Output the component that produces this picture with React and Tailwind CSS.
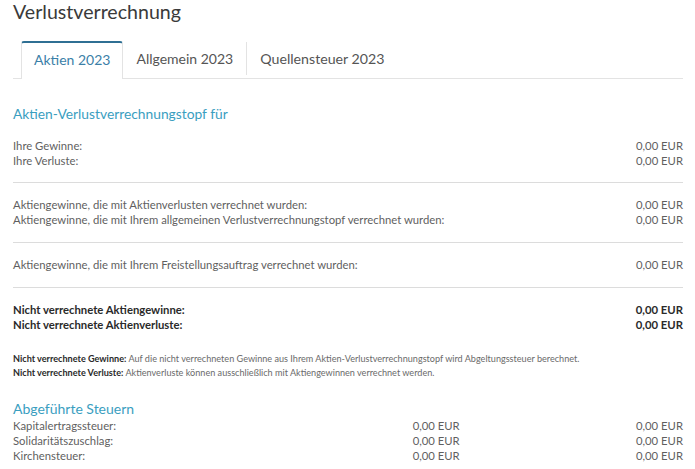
import React from "react";

const tabs = ["Aktien 2023", "Allgemein 2023", "Quellensteuer 2023"];

const Row = ({ label, value, bold }) => (
  <div className={`flex justify-between leading-[15px] ${bold ? "font-bold text-[#2a2a2a]" : "text-[#5f5f5f]"}`}>
    <span>{label}</span>
    <span>{value}</span>
  </div>
);

const taxes = ["Kapitalertragssteuer:", "Solidaritätszuschlag:", "Kirchensteuer:"];

export default function App() {
  return (
    <div className="w-[695px] h-[469px] overflow-hidden bg-white pl-[13px] pr-[12px] font-['Lato',sans-serif] text-[11.3px]">
      <h1 className="text-[19.6px] leading-[24px] text-[#3a3a3a]">Verlustverrechnung</h1>

      <div className="mt-[17px] flex border-b border-[#e3e3e3] pl-[8px]">
        <div className="-mb-px h-[38px] rounded-t-[3px] border-x border-t-2 border-x-[#e3e3e3] border-t-[#2f6f93] bg-white px-[12px] text-[14px] leading-[34px] text-[#3b7fa8]">
          {tabs[0]}
        </div>
        <div className="h-[37px] px-[13px] text-[14px] leading-[36px] text-[#555]">{tabs[1]}</div>
        <div className="mt-[1px] h-[33px] w-px bg-[#e3e3e3]" />
        <div className="h-[37px] px-[13px] text-[14.2px] leading-[36px] text-[#555]">{tabs[2]}</div>
      </div>

      <h2 className="mt-[25px] text-[13.8px] leading-[20px] text-[#3a9ebf]">Aktien-Verlustverrechnungstopf für</h2>

      <div className="border-b border-[#dcdcdc] pt-[14px] pb-[14px]">
        <Row label="Ihre Gewinne:" value="0,00 EUR" />
        <Row label="Ihre Verluste:" value="0,00 EUR" />
      </div>
      <div className="border-b border-[#dcdcdc] pt-[14px] pb-[15px]">
        <Row label="Aktiengewinne, die mit Aktienverlusten verrechnet wurden:" value="0,00 EUR" />
        <Row label="Aktiengewinne, die mit Ihrem allgemeinen Verlustverrechnungstopf verrechnet wurden:" value="0,00 EUR" />
      </div>
      <div className="border-b border-[#dcdcdc] pt-[14px] pb-[15px]">
        <Row label="Aktiengewinne, die mit Ihrem Freistellungsauftrag verrechnet wurden:" value="0,00 EUR" />
      </div>
      <div className="pt-[14px]">
        <Row bold label="Nicht verrechnete Aktiengewinne:" value="0,00 EUR" />
        <Row bold label="Nicht verrechnete Aktienverluste:" value="0,00 EUR" />
      </div>

      <div className="mt-[20px] text-[9.1px] leading-[14px] text-[#6a6a6a]">
        <p>
          <span className="font-bold text-[#2a2a2a]">Nicht verrechnete Gewinne:</span> Auf die nicht verrechneten Gewinne aus Ihrem Aktien-Verlustverrechnungstopf wird Abgeltungssteuer berechnet.
        </p>
        <p>
          <span className="font-bold text-[#2a2a2a]">Nicht verrechnete Verluste:</span> Aktienverluste können ausschließlich mit Aktiengewinnen verrechnet werden.
        </p>
      </div>

      <h2 className="mt-[20px] text-[14px] leading-[18px] text-[#3a9ebf]">Abgeführte Steuern</h2>
      <div className="text-[#5f5f5f]">
        {taxes.map((t) => (
          <div key={t} className="grid grid-cols-3 leading-[15px]">
            <span>{t}</span>
            <span className="text-right">0,00 EUR</span>
            <span className="text-right">0,00 EUR</span>
          </div>
        ))}
      </div>
    </div>
  );
}
